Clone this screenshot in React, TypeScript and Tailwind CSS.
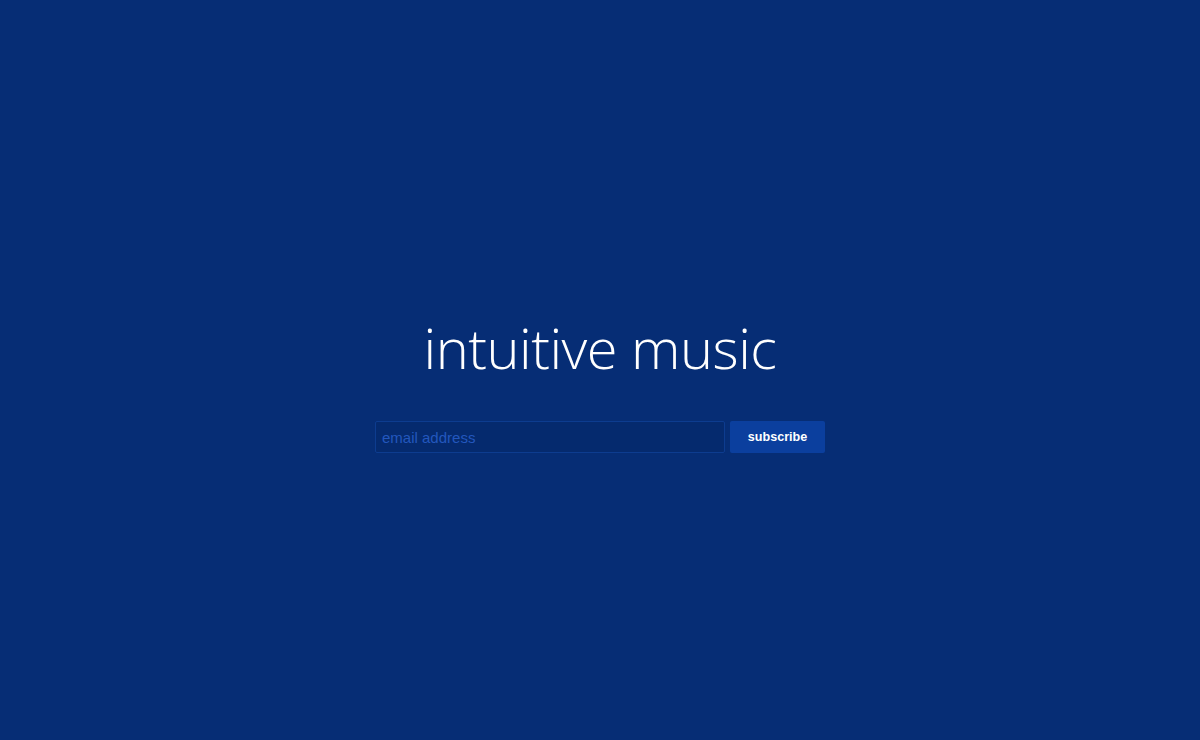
export default function App() {
  return (
    <div className="min-h-[740px] w-full bg-[#062d75] flex flex-col items-center justify-center">
      <div className="flex flex-col items-center pt-[32px]">
        <h1 className="text-[56px] leading-none text-white font-light tracking-[-0.5px]" style={{ fontFamily: '"Open Sans", "Noto Sans", sans-serif' }}>
          intuitive music
        </h1>
        <form className="mt-[46px] flex gap-[5px]" onSubmit={(e) => e.preventDefault()}>
          <input
            type="text"
            placeholder="email address"
            className="w-[350px] h-[32px] px-[6px] rounded-[2px] border border-[#0d3c8f] bg-[#052a6e] text-[15px] text-[#2a62c9] placeholder:text-[#2357bd] outline-none"
            style={{ fontFamily: '"Liberation Sans", Arial, sans-serif' }}
          />
          <button
            type="submit"
            className="w-[95px] h-[32px] rounded-[2px] bg-[#0b3f9e] text-white text-[12.6px] font-bold"
            style={{ fontFamily: '"Liberation Sans", Arial, sans-serif' }}
          >
            subscribe
          </button>
        </form>
      </div>
    </div>
  );
}
